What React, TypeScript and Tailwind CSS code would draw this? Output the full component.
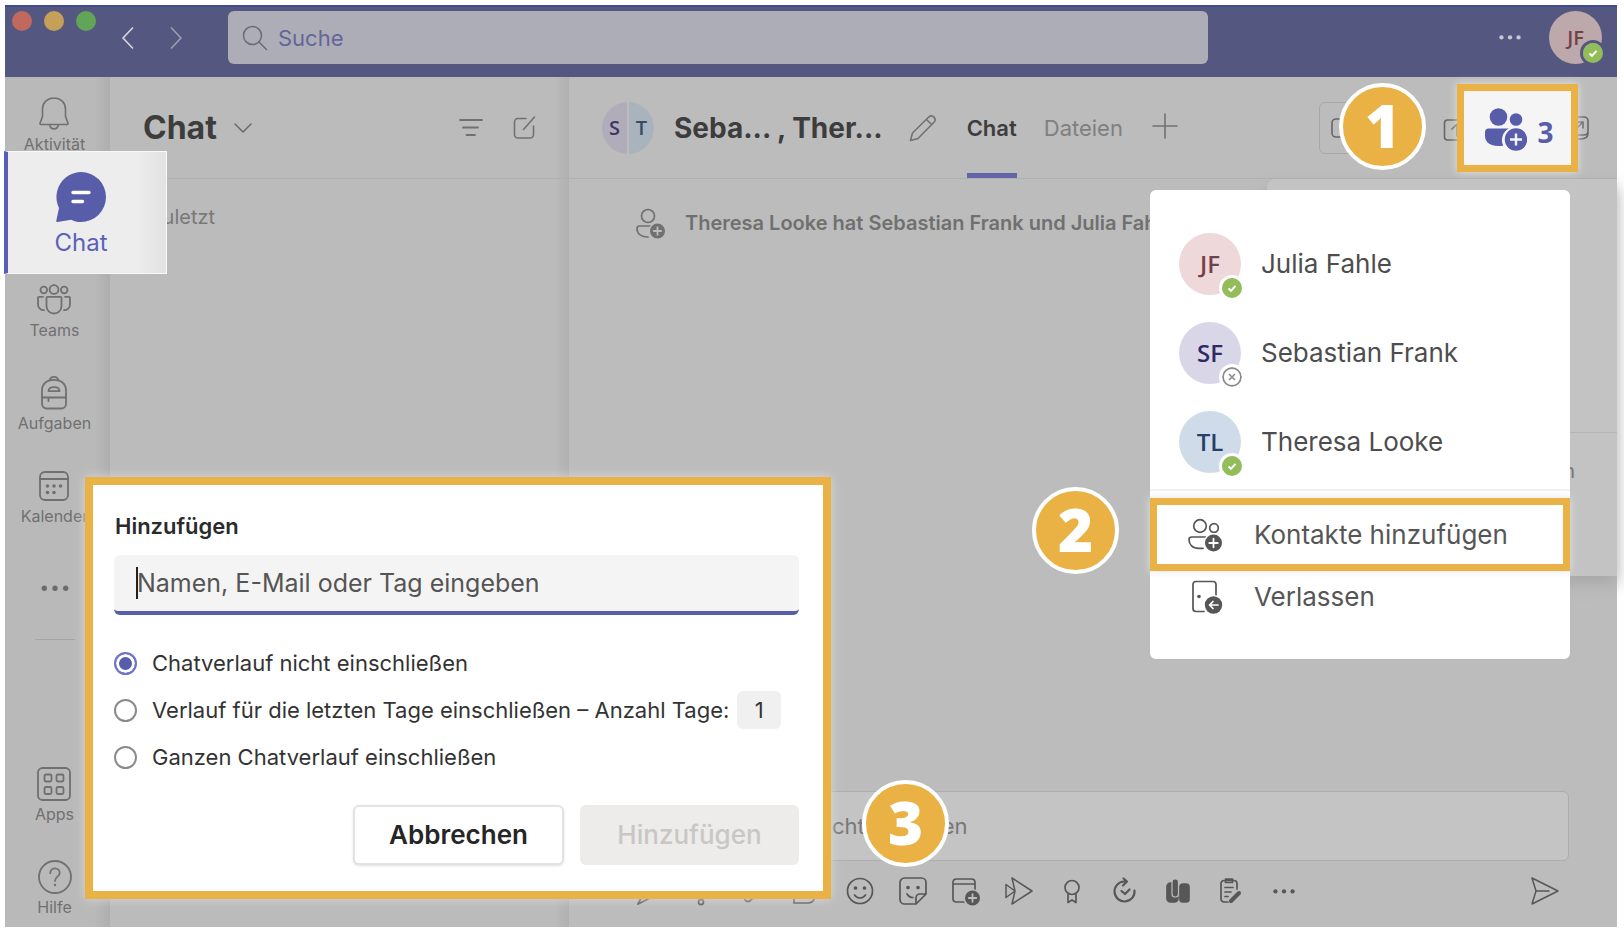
import React from "react";

type IconProps = { className?: string };

function Svg({ className, box, children, sw = 1.6 }: { className?: string; box: string; children: React.ReactNode; sw?: number }) {
  return (
    <svg viewBox={box} className={"shrink-0 " + (className ?? "")} fill="none" stroke="currentColor" strokeWidth={sw} strokeLinecap="round" strokeLinejoin="round" aria-hidden="true">
      {children}
    </svg>
  );
}

const BellIcon = () => (
  <Svg box="0 0 36 36" className="size-9">
    <path d="M18 2c-6.600 0-11.500 4.800-11.500 11v7.500L4 27.200c-.2.700.2 1.300.9 1.300h26.200c.7 0 1.100-.6.9-1.300l-2.500-6.700V13C29.500 6.800 24.600 2 18 2z" />
    <path d="M13.800 29c.4 2.400 2 3.900 4.200 3.900s3.800-1.500 4.200-3.900" />
  </Svg>
);

const TeamsIcon = () => (
  <Svg box="0 0 36 36" className="size-9" sw={1.8}>
    <circle cx="18" cy="7.500" r="4.400" />
    <circle cx="7.800" cy="8" r="3.300" />
    <circle cx="28.200" cy="8" r="3.300" />
    <path d="M11.500 14.800h13c.6 0 1 .4 1 1V24a7.500 7.500 0 0 1-15 0v-8.200c0-.6.400-1 1-1z" />
    <path d="M7 14.800H3.200c-.7 0-1.200.4-1.200 1v6.700a5.800 5.800 0 0 0 6 5.700M29 14.800h3.800c.7 0 1.200.4 1.200 1v6.700a5.800 5.800 0 0 1-6 5.700" />
  </Svg>
);

const BackpackIcon = () => (
  <Svg box="0 0 36 36" className="size-9" sw={1.800}>
    <path d="M6 15.500C6 9 10.500 4.800 18 4.800S30 9 30 15.500V29a4.500 4.500 0 0 1-4.500 4.500h-15A4.500 4.500 0 0 1 6 29z" />
    <path d="M13.800 5c.4-2 2-3.200 4.200-3.200S21.800 3 22.200 5M6 22.500h24M12.500 22.500v3.700" />
    <path d="M12.500 16.200c0-2.400 2.200-4 5.500-4s5.500 1.600 5.500 4z" />
  </Svg>
);

const CalendarIcon = () => (
  <Svg box="0 0 36 36" className="size-9" sw={1.800}>
    <rect x="4" y="4" width="28" height="28" rx="5" />
    <path d="M4 11h28" />
    <g fill="currentColor" stroke="none">
      <circle cx="11.500" cy="18" r="1.800" /><circle cx="18" cy="18" r="1.800" /><circle cx="24.500" cy="18" r="1.800" />
      <circle cx="11.500" cy="24.500" r="1.800" /><circle cx="18" cy="24.500" r="1.800" />
    </g>
  </Svg>
);

const AppsIcon = () => (
  <Svg box="0 0 36 36" className="size-9" sw={1.800}>
    <rect x="2" y="2" width="32" height="32" rx="4.500" />
    <rect x="8.500" y="8.500" width="7" height="7" rx="1.500" /><rect x="20.500" y="8.500" width="7" height="7" rx="1.500" />
    <rect x="8.500" y="21" width="7" height="7" rx="1.500" /><rect x="20.500" y="21" width="7" height="7" rx="1.500" />
  </Svg>
);

const HelpIcon = () => (
  <Svg box="0 0 36 36" className="size-9" sw={1.800}>
    <circle cx="18" cy="18" r="16" />
    <path d="M13.300 14.200c0-2.900 2-4.800 4.700-4.800s4.700 1.900 4.700 4.500c0 3.600-4.700 4-4.700 8" />
    <circle cx="18" cy="26" r="1.200" fill="currentColor" stroke="none" />
  </Svg>
);

const Dots = ({ className }: IconProps) => (
  <svg viewBox="0 0 28 8" className={"shrink-0 " + (className ?? "")} fill="currentColor" aria-hidden="true">
    <circle cx="4" cy="4" r="2.500" /><circle cx="14" cy="4" r="2.500" /><circle cx="24" cy="4" r="2.500" />
  </svg>
);

const PlusDisc = ({ cx, cy, r, ring }: { cx: number; cy: number; r: number; ring: string }) => (
  <g>
    <circle cx={cx} cy={cy} r={r + 1.5} fill={ring} stroke="none" />
    <circle cx={cx} cy={cy} r={r} fill="currentColor" stroke="none" />
    <path d={`M${cx - r * 0.5} ${cy}h${r}M${cx} ${cy - r * 0.5}v${r}`} stroke={ring} strokeWidth="1.800" />
  </g>
);

const AddPeopleOutline = () => (
  <Svg box="0 0 36 36" className="size-9" sw={1.700}>
    <circle cx="13" cy="9" r="6.300" />
    <circle cx="27" cy="11" r="4.300" />
    <path d="M19 20H4.500C3 20 2 21 2 22.500c0 5 3.500 8.800 10 8.800h4" />
    <PlusDisc cx={26.500} cy={26} r={8.500} ring="#fff" />
  </Svg>
);

const LeaveIcon = () => (
  <Svg box="0 0 36 36" className="size-9" sw={1.700}>
    <path d="M29 16V5.500C29 3.500 28 2.500 26 2.500H9c-2 0-3 1-3 3v24c0 2 1 3 3 3h8" />
    <circle cx="12" cy="17.500" r="1.800" fill="currentColor" stroke="none" />
    <circle cx="26.500" cy="26" r="10" fill="#fff" stroke="none" />
    <circle cx="26.500" cy="26" r="8.700" fill="currentColor" stroke="none" />
    <path d="M31 26h-8M26 22.500L22.500 26l3.500 3.500" stroke="#fff" />
  </Svg>
);

const railTop = [
  { label: "Teams", icon: <TeamsIcon /> },
  { label: "Aufgaben", icon: <BackpackIcon /> },
  { label: "Kalender", icon: <CalendarIcon /> },
];

function RailItem({ label, icon }: { label: string; icon: React.ReactNode }) {
  return (
    <button className="flex flex-col items-center gap-0.5 text-[#707070]">
      {icon}
      <span className="text-base leading-5">{label}</span>
    </button>
  );
}

function Rail() {
  return (
    <nav className="flex w-[105px] shrink-0 flex-col bg-[linear-gradient(to_right,#b9b9b9_85%,#aeaeae)] pt-[19px] pr-[6px] pb-2.5">
      <div className="flex flex-col items-center gap-[35px]">
        <RailItem label="Aktivität" icon={<BellIcon />} />
        <div className="relative h-[58px] w-full">
          <button className="absolute -top-[38px] -left-px z-10 flex h-[123px] w-[163px] flex-col items-center justify-center gap-1 border border-l-4 border-[#f8f8f8] border-l-[#595fb5] bg-[linear-gradient(to_right,#ededed_80%,#e2e2e2)] pr-3 text-[#5b61b8]">
            <svg viewBox="0 0 52 52" className="mt-1 size-[52px]" aria-hidden="true">
              <path d="M26 1a25 25 0 0 1 0 50c-4 0-7-.8-9.800-2.300L2.500 51c-1 .2-1.500-.4-1.200-1.200L4 37A25 25 0 0 1 26 1z" fill="#575da9" />
              <path d="M18 21.500h16M18 30.500h9.500" stroke="#fff" strokeWidth="3.400" strokeLinecap="round" />
            </svg>
            <span className="text-2xl leading-8">Chat</span>
          </button>
        </div>
        {railTop.map((r) => <RailItem key={r.label} {...r} />)}
        <button aria-label="Weitere Apps" className="flex h-[54px] items-center text-[#6b6b6b]"><Dots className="w-[30px]" /></button>
      </div>
      <hr className="mx-auto mt-6 w-10 border-[#a5a5a5]" />
      <div className="mt-auto flex flex-col items-center gap-[35px]">
        <RailItem label="Apps" icon={<AppsIcon />} />
        <RailItem label="Hilfe" icon={<HelpIcon />} />
      </div>
    </nav>
  );
}

function Presence({ away, ring = "-bottom-1.5 border-white" }: { away?: boolean; ring?: string }) {
  return (
    <span className={"absolute -right-1 rounded-full border-3 " + ring}>
      {away ? (
        <svg viewBox="0 0 20 20" className="size-5 rounded-full bg-white" fill="none" stroke="#8b8b8b" aria-hidden="true">
          <circle cx="10" cy="10" r="9" strokeWidth="1.800" /><path d="M7 7l6 6M13 7l-6 6" strokeWidth="1.600" />
        </svg>
      ) : (
        <svg viewBox="0 0 20 20" className="size-5" fill="none" aria-hidden="true">
          <circle cx="10" cy="10" r="10" fill="#93bd58" /><path d="M6.500 10.500L9 12.800l4.500-5" stroke="#fff" strokeWidth="2" />
        </svg>
      )}
    </span>
  );
}

function TitleBar() {
  return (
    <header className="flex h-[72px] shrink-0 items-start border-t-2 border-[#3f4c94] bg-[#54577f]">
      <div className="flex w-[223px] shrink-0 items-start pl-[7px]">
        <div className="flex gap-3 pt-1">
          <span className="size-5 rounded-full bg-[#c0695f]" />
          <span className="size-5 rounded-full bg-[#c5a157]" />
          <span className="size-5 rounded-full bg-[#62a558]" />
        </div>
        <button aria-label="Zurück" className="ml-[22px] pt-[19px] text-[#d5d5dd]"><Svg box="0 0 20 24" className="h-6 w-5" sw={1.700}><path d="M14.500 2L5 12l9.500 10" /></Svg></button>
        <button aria-label="Vorwärts" className="ml-7 pt-[19px] text-[#9c9dae]"><Svg box="0 0 20 24" className="h-6 w-5" sw={1.700}><path d="M5.500 2L15 12l-9.500 10" /></Svg></button>
      </div>
      <label className="mt-1 flex h-[53px] w-[980px] shrink items-center gap-2.5 rounded-md bg-[#adadb7] px-3.5 text-[#6a6b78]">
        <Svg box="0 0 26 26" className="size-[26px]" sw={1.500}><circle cx="10.500" cy="10.500" r="9" /><path d="M17 17l7.500 7.500" /></Svg>
        <input aria-label="Suche" placeholder="Suche" className="w-full min-w-0 bg-transparent text-[22px] leading-7 outline-none placeholder:text-[#64669a] placeholder:opacity-100" />
      </label>
      <div className="ml-auto flex items-center gap-[27px] pt-1 pr-[15px]">
        <button aria-label="Mehr" className="text-[#c8c8d2]"><Dots className="w-6" /></button>
        <div className="relative flex size-[53px] items-center justify-center rounded-full bg-[#bda9ab] font-['Open_Sans',sans-serif] text-xl font-semibold text-[#74404a]">
          JF
          <Presence ring="-bottom-0.5 border-[#54577f]" />
        </div>
      </div>
    </header>
  );
}

function ChatList() {
  return (
    <section className="flex w-[459px] shrink-0 flex-col bg-[linear-gradient(to_right,#bbbbbb_97%,#b0b0b0)]">
      <div className="flex h-[102px] items-center border-b border-[#b0b0b0] pr-8 pl-[33px]">
        <h1 className="text-[32px] leading-10 font-bold text-[#3d3d3d]">Chat</h1>
        <button aria-label="Ansicht wählen" className="ml-4 text-[#6b6b6b]"><Svg box="0 0 20 20" className="size-5"><path d="M2 6l8 8 8-8" /></Svg></button>
        <div className="ml-auto flex items-center gap-[27px] text-[#717171]">
          <button aria-label="Filtern"><Svg box="0 0 26 26" className="size-[26px]" sw={1.800}><path d="M2 5h22M5 12.500h15M8.500 20h8.500" /></Svg></button>
          <button aria-label="Neuer Chat"><Svg box="0 0 26 26" className="size-[26px]"><path d="M15 3.500H7A3.500 3.500 0 0 0 3.500 7v12.500A3.500 3.500 0 0 0 7 23h12a3.500 3.500 0 0 0 3.500-3.500V11M12.500 14.500L23.500 2" /></Svg></button>
        </div>
      </div>
      <p className="pt-[26px] pl-10 text-xl leading-6 text-[#787878]">Zuletzt</p>
    </section>
  );
}

function ChatHeader() {
  return (
    <div className="flex h-[102px] shrink-0 items-center border-b border-[#b0b0b0] pl-[33px]">
      <div className="flex h-[52px] w-[52px] shrink-0 gap-0.5 overflow-hidden rounded-full font-['Open_Sans',sans-serif] text-xl font-semibold">
        <span className="flex flex-1 items-center justify-center bg-[#b0acb9] text-[#3b3764]">S</span>
        <span className="flex flex-1 items-center justify-center bg-[#a9b3bd] text-[#344b66]">T</span>
      </div>
      <h2 className="ml-5 text-[28px] leading-9 font-bold whitespace-nowrap text-[#3d3d3d]">Seba... , Ther...</h2>
      <button aria-label="Bearbeiten" className="ml-[26px] text-[#717171]">
        <Svg box="0 0 28 28" className="size-7"><path d="M1.500 26.500L3.500 19 20 2.800a3.700 3.700 0 0 1 5.200 5.200L9 24.500zM17.500 5.500l5 5" /></Svg>
      </button>
      <div className="ml-[30px] flex gap-[27px] self-stretch text-[22px] leading-7">
        <button className="border-b-5 border-[#6264a7] pt-1.5 font-semibold text-[#3d3d3d]">Chat</button>
        <button className="border-b-5 border-transparent pt-1.5 text-[#7f7f7f]">Dateien</button>
      </div>
      <button aria-label="Registerkarte hinzufügen" className="ml-7 pb-1 text-[#717171]"><Svg box="0 0 28 28" className="size-7"><path d="M14 2v24M2 14h24" /></Svg></button>
      <div className="ml-auto flex items-center text-[#666]">
        <button aria-label="Besprechung" className="flex h-[52px] w-[88px] items-center rounded-md border border-[#a8a8a8] pl-2.5"><Svg box="0 0 32 22" className="w-8"><rect x="2" y="2" width="21" height="18" rx="4" /><path d="M23 9l7-4v13l-7-4" /></Svg></button>
        <button aria-label="Freigeben" className="ml-9 pt-1"><Svg box="0 0 28 24" className="w-7"><rect x="1.500" y="2" width="25" height="20" rx="3" /><path d="M14 18V6M9 11l5-5 5 5" /></Svg></button>
        <button className="relative z-10 ml-[-14px] flex h-[88px] w-[121px] items-center justify-center gap-2.5 border-7 border-[#eab145] bg-[#f5f5f5] pt-1 pl-1 text-[#575da9] shadow-[0_0_8px_#e4e4e4]" aria-label="3 Teilnehmer">
          <svg viewBox="0 0 42 43" className="h-[43px] w-[42px]" fill="currentColor" aria-hidden="true">
            <circle cx="13.500" cy="9" r="8.800" /><circle cx="31" cy="11.500" r="6.300" />
            <path d="M3.500 20.500H24a13 13 0 0 0-5.800 17.200C4 39.500 0 33 0 28v-4c0-2 1.500-3.500 3.500-3.500z" />
            <circle cx="31" cy="31.500" r="12.800" fill="#f5f5f5" /><circle cx="31" cy="31.500" r="11.200" />
            <path d="M25 31.500h12M31 25.500v12" stroke="#f5f5f5" strokeWidth="2.400" />
          </svg>
          <span className="pt-1 font-['Open_Sans',sans-serif] text-[28px] leading-9 font-bold">3</span>
        </button>
        <button aria-label="Auslagern" className="mr-[27px] ml-[-14px]"><Svg box="0 0 26 26" className="size-[26px]"><rect x="2" y="2" width="22" height="18" rx="4" /><path d="M6 24h11c4 0 7-2 7-6M11 15l8-8M13 7h6v6" /></Svg></button>
      </div>
    </div>
  );
}

const tools = [
  { label: "Formatieren", icon: <path d="M6 29l5-10L24 3l5 5-13 16zM16 24L6 29" /> },
  { label: "Priorität", icon: <><path d="M13 3h6l-1 18h-4z" /><circle cx="16" cy="27" r="2.500" /></> },
  { label: "Anfügen", icon: <path d="M24 12L14 24c-4 5-10 1-6-4L20 6c3-4 8 0 5 4" /> },
  { label: "Loop", icon: <path d="M3 28V14c0-7 9-11 15-5s9 19-1 19z" /> },
  { label: "Emoji", icon: <><circle cx="16" cy="16" r="12.500" /><path d="M10.500 20c3 4 8 4 11 0" /><circle cx="11.500" cy="13" r="1" fill="currentColor" /><circle cx="20.500" cy="13" r="1" fill="currentColor" /></> },
  { label: "Sticker", icon: <><path d="M19 29H7.500A4.500 4.500 0 0 1 3 24.500v-17A4.500 4.500 0 0 1 7.500 3h17A4.500 4.500 0 0 1 29 7.500V19zM19 29v-6a4 4 0 0 1 4-4h6M10 19c1.500 2.500 3.500 3.500 6 3.500" /><circle cx="11" cy="12.500" r="1" fill="currentColor" /><circle cx="21" cy="12.500" r="1" fill="currentColor" /></> },
  { label: "Besprechung planen", icon: <><path d="M25 15V7.500C25 5 24 4 21.500 4h-15C4 4 3 5 3 7.500v16C3 26 4 27 6.500 27H14M3 9h22" /><PlusDisc cx={22.500} cy={23} r={7.500} ring="#bcbcbc" /></> },
  { label: "Stream", icon: <path d="M9 3l20 13L9 29l3-13zM3 9.500L12 16l-9 6.500V9.500z" strokeWidth={1.500} /> },
  { label: "Lob", icon: <><circle cx="16" cy="12.500" r="7" /><path d="M12 19v8.500l4-2.500 4 2.500V19" /></> },
  { label: "Updates", icon: <path d="M25.500 15.500A10 10 0 1 1 15 6.500h3M14.500 3.500l3.500 3-4 4M12.500 16l3.500 3L20.500 14.500" strokeWidth={2.200} /> },
  { label: "Viva", icon: <><rect x="5" y="8" width="11" height="19" rx="3.500" fill="currentColor" /><rect x="10" y="4" width="6.500" height="18" rx="3" fill="currentColor" stroke="#bcbcbc" strokeWidth={1.200} /><rect x="18" y="9" width="9" height="18" rx="3" fill="currentColor" /></> },
  { label: "Genehmigungen", icon: <><path d="M13 27H9a3 3 0 0 1-3-3V8.500a3 3 0 0 1 3-3h10a3 3 0 0 1 3 3V14M10.500 4h7v3.500h-7zM10 12.500h8M10 17h6M10 21.500h3" /><path d="M24 18l-8 8" strokeWidth={4} /></> },
];

function Composer() {
  return (
    <div className="mt-auto flex flex-col pr-[48px] pb-5 pl-[59px]">
      <input aria-label="Nachricht" placeholder="Neue Nachricht eingeben" className="h-[70px] rounded-md border border-[#adadad] bg-[#c4c4c4] pl-[73px] text-[22px] leading-7 outline-none placeholder:text-[#777] placeholder:opacity-100" />
      <div className="mt-3.5 flex items-center gap-[21px] pl-1 text-[#575757]">
        {tools.map((t) => (
          <button key={t.label} aria-label={t.label}><Svg box="0 0 32 32" className="size-8" sw={1.700}>{t.icon}</Svg></button>
        ))}
        <button aria-label="Weitere Optionen"><Dots className="ml-1 w-6" /></button>
        <button aria-label="Senden" className="ml-auto mr-2"><Svg box="0 0 32 32" className="size-8" sw={1.500}><path d="M3 3l26 13L3 29l4-13zM7 16h13" /></Svg></button>
      </div>
    </div>
  );
}

function Step({ n, place }: { n: number; place: string }) {
  return (
    <div className={"absolute z-30 flex size-[87px] items-center justify-center rounded-full border-4 border-white bg-[#eab145] pb-1 font-['Open_Sans',sans-serif] text-[60px] leading-[60px] font-extrabold text-white " + place}>
      {n}
    </div>
  );
}

const people = [
  { initials: "JF", name: "Julia Fahle", tint: "bg-[#eed8da] text-[#74404a]", away: false },
  { initials: "SF", name: "Sebastian Frank", tint: "bg-[#d9d6e8] text-[#2f2a63]", away: true },
  { initials: "TL", name: "Theresa Looke", tint: "bg-[#d0dbe9] text-[#24406b]", away: false },
];

function PeoplePopover() {
  return (
    <div className="absolute top-[185px] right-[47px] z-20 flex w-[420px] flex-col rounded-md bg-white pb-6 text-2xl leading-8 text-[#4d4d4d]">
      <ul className="flex flex-col gap-[27px] px-[29px] pt-[43px]">
        {people.map((p) => (
          <li key={p.name} className="flex items-center gap-5">
            <span className={"relative flex size-[62px] items-center justify-center rounded-full font-['Open_Sans',sans-serif] text-2xl font-semibold " + p.tint}>
              {p.initials}
              <Presence away={p.away} />
            </span>
            <span className="text-[26px]">{p.name}</span>
          </li>
        ))}
      </ul>
      <hr className="mt-4 border-t-2 border-[#f0f0f0]" />
      <button className="mt-[7px] flex h-[73px] items-center gap-[31px] border-7 border-[#eab145] pl-[30px] text-[26px] text-[#565656] shadow-[0_0_8px_#e4e4e4]"><AddPeopleOutline />Kontakte hinzufügen</button>
      <button className="mt-2 flex h-9 items-center gap-[31px] pl-[37px] text-[26px] text-[#565656]"><LeaveIcon />Verlassen</button>
      <div className="h-5" />
    </div>
  );
}

const radioClass = "size-[23px] shrink-0 appearance-none rounded-full border-2 border-[#8a8a8a] bg-white checked:border-[#6f75c4] checked:bg-[#575da9] checked:shadow-[inset_0_0_0_3px_#fff]";

function AddDialog() {
  return (
    <form onSubmit={(e) => e.preventDefault()} className="absolute top-[472px] left-20 z-20 flex w-[746px] flex-col border-8 border-[#eab145] bg-white pt-[27px] pr-6 pb-[26px] pl-[21px] text-[#333] shadow-[0_0_10px_#d8d8d8]">
      <label htmlFor="names" className="pl-px text-[22px] leading-7 font-semibold text-[#2b2b2b]">Hinzufügen</label>
      <div className="relative mt-[15px] flex">
        <input id="names" placeholder="Namen, E-Mail oder Tag eingeben" className="h-[60px] w-full rounded-md border-b-4 border-[#575da9] bg-[#f4f4f4] pl-[23px] text-[25px] leading-8 outline-none placeholder:text-[#555] placeholder:opacity-100" />
        <span className="absolute top-3 left-[22px] h-8 w-0.5 bg-[#222]" />
      </div>
      <fieldset className="mt-[29px] flex flex-col gap-[9px] text-[22px] leading-7">
        <label className="flex h-[38px] items-center gap-[15px]"><input type="radio" name="history" defaultChecked className={radioClass} />Chatverlauf nicht einschließen</label>
        <div className="flex h-[38px] items-center gap-2">
          <label className="flex items-center gap-[15px] whitespace-nowrap"><input type="radio" name="history" className={radioClass} />Verlauf für die letzten Tage einschließen – Anzahl Tage:</label>
          <input aria-label="Anzahl Tage" defaultValue="1" className="h-[38px] w-11 rounded-md bg-[#f0f0f0] text-center outline-none" />
        </div>
        <label className="flex h-[38px] items-center gap-[15px]"><input type="radio" name="history" className={radioClass} />Ganzen Chatverlauf einschließen</label>
      </fieldset>
      <div className="mt-[29px] flex justify-end gap-4 text-[26px] leading-8 font-semibold">
        <button type="button" className="h-[60px] w-[211px] rounded-md border-2 border-[#e3e3e3] bg-white text-[#252525] shadow-sm">Abbrechen</button>
        <button type="submit" disabled className="h-[60px] w-[219px] rounded-md bg-[#edecea] font-medium text-[#c8c7c5]">Hinzufügen</button>
      </div>
    </form>
  );
}

export default function App() {
  return (
    <div className="flex min-h-screen flex-col bg-white pt-[5px] pr-[7px] pb-[7px] pl-[5px] font-[Inter,'Noto_Sans',sans-serif]">
      <div className="relative flex flex-1 flex-col bg-[#bcbcbc]">
        <TitleBar />
        <div className="flex flex-1">
          <Rail />
          <ChatList />
          <main className="relative flex min-w-0 flex-1 flex-col">
            <ChatHeader />
            <div className="flex items-center gap-[18px] pt-7 pl-[66px] text-[#707070]">
              <Svg box="0 0 32 32" className="size-8" sw={1.700}>
                <circle cx="13" cy="9" r="6.500" />
                <path d="M17 19H4.500C3 19 2 20 2 21.500c0 5 4 8.500 11 8.500" />
                <PlusDisc cx={22.500} cy={24} r={7.500} ring="#bcbcbc" />
              </Svg>
              <p className="text-xl leading-8 font-semibold whitespace-nowrap">Theresa Looke hat Sebastian Frank und Julia Fahle hinzugefügt.</p>
            </div>
            <div className="absolute top-[102px] right-0 flex h-[397px] w-[350px] flex-col rounded-tl-lg bg-[#c3c3c3] shadow-[0_8px_16px_#a8a8a8]">
              <div className="h-[254px] border-b border-[#b5b5b5]" />
              <p className="pt-5 pr-[42px] text-right text-xl leading-9 text-[#777]">Kontakte hinzufügen</p>
            </div>
            <Composer />
          </main>
        </div>
        <PeoplePopover />
        <AddDialog />
        <Step n={1} place="top-[78px] right-[191px]" />
        <Step n={2} place="top-[482px] right-[498px]" />
        <Step n={3} place="top-[775px] left-[857px]" />
      </div>
    </div>
  );
}
